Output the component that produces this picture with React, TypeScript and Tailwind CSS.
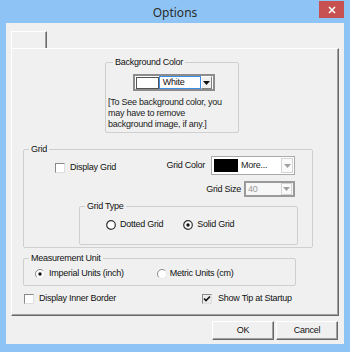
import React from 'react';

const ui = "font-['Liberation_Sans',Arial,sans-serif]";

function Check({ checked = false }: { checked?: boolean }) {
  return (
    <span
      className={`w-[10px] h-[10px] shrink-0 border border-t-[#8a8a8a] border-l-[#8a8a8a] border-r-[#dedede] border-b-[#dedede] flex items-center justify-center ${
        checked ? 'bg-[#ececec]' : 'bg-white'
      }`}
    >
      {checked && (
        <svg width="8" height="8" viewBox="0 0 8 8">
          <path d="M1 3.5 L3 5.5 L7 1.5" stroke="#111" strokeWidth="1.6" fill="none" />
        </svg>
      )}
    </span>
  );
}

function Radio({ on = false, dark = false }: { on?: boolean; dark?: boolean }) {
  return (
    <svg width="10" height="10" viewBox="0 0 10 10" className="shrink-0">
      {dark ? (
        <circle cx="5" cy="5" r="4.3" fill="#fff" stroke="#333" strokeWidth="1.2" />
      ) : (
        <>
          <circle cx="5" cy="5" r="4.5" fill="#fff" />
          <path d="M8.2 1.8 A4.5 4.5 0 0 0 1.8 8.2" stroke="#8a8a8a" strokeWidth="1" fill="none" />
          <path d="M8.2 1.8 A4.5 4.5 0 0 1 1.8 8.2" stroke="#e8e8e8" strokeWidth="1" fill="none" />
        </>
      )}
      {on && <circle cx="5" cy="5" r="1.7" fill="#111" />}
    </svg>
  );
}

function Arrow({ color }: { color: string }) {
  return (
    <svg width="7" height="4" viewBox="0 0 7 4">
      <path d="M0 0 H7 L3.5 4 Z" fill={color} />
    </svg>
  );
}

function Group({
  title,
  className,
  children,
}: {
  title: string;
  className: string;
  children?: React.ReactNode;
}) {
  return (
    <fieldset className={`border border-[#cfcfcf] rounded-[2px] ${className}`}>
      <legend className="ml-[5px] px-[2px] leading-[11px]">{title}</legend>
      {children}
    </fieldset>
  );
}

function Button({ label }: { label: string }) {
  return (
    <button className="w-[62px] h-[19px] bg-[#f0f0f0] border border-t-white border-l-white border-r-[#696969] border-b-[#696969] shadow-[inset_-1px_-1px_0_#a0a0a0] flex items-center justify-center pb-[1px]">
      {label}
    </button>
  );
}

export default function App() {
  return (
    <div className={`w-[350px] h-[352px] bg-[#8dc4f5] flex flex-col text-[9px] leading-[11px] tracking-[-0.25px] text-[#111] ${ui}`}>
      {/* Title bar */}
      <div className="h-[23px] relative flex items-center justify-center">
        <span className="font-['Noto_Sans',sans-serif] text-[12px] tracking-normal text-[#2b2b2b] mt-[1px]">Options</span>
        <button className="absolute right-[6px] top-[1px] w-[25px] h-[17px] bg-[#c75050] flex items-center justify-center">
          <svg width="8" height="8" viewBox="0 0 8 8">
            <path d="M1 1 L7 7 M7 1 L1 7" stroke="#fff" strokeWidth="1.6" />
          </svg>
        </button>
      </div>

      {/* Client area */}
      <div className="mx-[6px] h-[321px] bg-[#f0f0f0] pt-[8px] px-[5px]">
        {/* empty tab */}
        <div className="w-[36px] h-[17px] border-l border-t border-white border-r border-r-[#696969] shadow-[inset_-1px_0_0_#a0a0a0]" />

        {/* tab page */}
        <div className="h-[268px] border border-t-white border-l-white border-r-[#696969] border-b-[#696969] shadow-[inset_-1px_-1px_0_#a0a0a0] flex flex-col">
          <Group title="Background Color" className="ml-[93px] mt-[8px] w-[134px] h-[76px] px-[2px]">
            <div className="ml-[25px] mt-[6px] w-[82px] h-[17px] border-2 border-[#8c8c8c] bg-white flex items-center">
              <span className="w-[23px] h-[12px] border border-[#555] ml-[1px] bg-white" />
              <span className="w-[43px] h-[13px] border border-[#3c8ee8] pl-[3px] flex items-center">White</span>
              <span className="ml-auto mr-[1px] w-[11px] h-[13px] bg-[#f0f0f0] border border-t-white border-l-white border-r-[#808080] border-b-[#808080] flex items-center justify-center">
                <Arrow color="#111" />
              </span>
            </div>
            <p className="mt-[6px] text-[#222]">
              [To See background color, you
              <br />
              may have to remove
              <br />
              background image, if any.]
            </p>
          </Group>

          <Group title="Grid" className="ml-[11px] mt-[11px] w-[290px] h-[104px]">
            <div className="flex items-start mt-[1px]">
              <label className="ml-[31px] mt-[6px] flex items-center gap-[5px]">
                <Check />
                <span>Display Grid</span>
              </label>
              <div className="ml-auto mr-[17px] flex flex-col items-end gap-[6px]">
                <div className="flex items-center gap-[6px]">
                  <span>Grid Color</span>
                  <div className="w-[84px] h-[19px] border border-[#a9a9a9] bg-white flex items-center">
                    <span className="w-[24px] h-[13px] bg-black ml-[2px]" />
                    <span className="ml-[3px] text-[#222]">More...</span>
                    <span className="ml-auto mr-[1px] w-[12px] h-[15px] border border-[#d4d4d4] bg-[#fafafa] flex items-center justify-center">
                      <Arrow color="#a0a0a0" />
                    </span>
                  </div>
                </div>
                <div className="flex items-center gap-[3px]">
                  <span>Grid Size</span>
                  <div className="w-[51px] h-[16px] border-2 border-[#9a9a9a] bg-[#f7f7f7] flex items-center">
                    <span className="ml-[2px] text-[#9a9a9a]">40</span>
                    <span className="ml-auto mr-[1px] w-[11px] h-[12px] border border-[#d4d4d4] bg-[#fafafa] flex items-center justify-center">
                      <Arrow color="#a0a0a0" />
                    </span>
                  </div>
                </div>
              </div>
            </div>

            <Group title="Grid Type" className="ml-[55px] mt-[4px] w-[219px] h-[44px]">
              <div className="flex items-center mt-[7px] ml-[26px]">
                <label className="flex items-center gap-[4px]">
                  <Radio dark />
                  <span>Dotted Grid</span>
                </label>
                <label className="flex items-center gap-[4px] ml-[20px]">
                  <Radio dark on />
                  <span>Solid Grid</span>
                </label>
              </div>
            </Group>
          </Group>

          <Group title="Measurement Unit" className="ml-[11px] mt-[5px] w-[273px] h-[33px]">
            <div className="flex items-center mt-[4px] ml-[11px]">
              <label className="flex items-center gap-[4px]">
                <Radio on />
                <span>Imperial Units (inch)</span>
              </label>
              <label className="flex items-center gap-[3px] ml-[33px]">
                <Radio />
                <span>Metric Units (cm)</span>
              </label>
            </div>
          </Group>

          <div className="flex items-center mt-[7px] ml-[12px]">
            <label className="flex items-center gap-[5px]">
              <Check />
              <span>Display Inner Border</span>
            </label>
            <label className="flex items-center gap-[6px] ml-[86px]">
              <Check checked />
              <span>Show Tip at Startup</span>
            </label>
          </div>
        </div>

        {/* buttons */}
        <div className="flex justify-end gap-[2px] mt-[5px] mr-[1px]">
          <Button label="OK" />
          <Button label="Cancel" />
        </div>
      </div>
    </div>
  );
}
